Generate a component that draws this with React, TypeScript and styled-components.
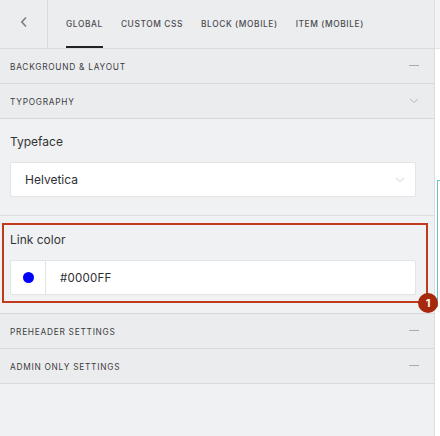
import React from "react";
import styled, { createGlobalStyle } from "styled-components";

const GlobalStyle = createGlobalStyle`
  html, body {
    margin: 0;
    padding: 0;
    background: #ffffff;
  }
  body {
    font-family: Inter, "Noto Sans", "Liberation Sans", sans-serif;
    -webkit-font-smoothing: antialiased;
  }
  #root {
    height: 436px;
  }
`;

const tabs = ["Global", "Custom CSS", "Block (Mobile)", "Item (Mobile)"];

const App = () => {
  return (
    <>
      <GlobalStyle />
      <SPage>
        <SPanel>
          <SHeader>
            <SBack>
              <svg width="10" height="12" viewBox="0 0 10 12">
                <path
                  d="M7 1.5 L2.8 6 L7 10.5"
                  fill="none"
                  stroke="#7c7d80"
                  strokeWidth="1.6"
                />
              </svg>
            </SBack>
            <STabs>
              {tabs.map((tab, i) => (
                <STab key={tab} active={i === 0}>
                  {tab}
                </STab>
              ))}
            </STabs>
          </SHeader>

          <SSection>
            <span>Background &amp; Layout</span>
            <MinusIcon />
          </SSection>
          <SSection>
            <span>Typography</span>
            <svg width="10" height="6" viewBox="0 0 10 6">
              <path
                d="M1 1 L5 4.5 L9 1"
                fill="none"
                stroke="#b8b9bc"
                strokeWidth="1"
              />
            </svg>
          </SSection>

          <SBody>
            <SField>
              <SLabel>Typeface</SLabel>
              <SInput>
                <SValue>Helvetica</SValue>
                <svg width="10" height="6" viewBox="0 0 10 6">
                  <path
                    d="M1 1 L5 4.5 L9 1"
                    fill="none"
                    stroke="#cfd0d3"
                    strokeWidth="1"
                  />
                </svg>
              </SInput>
            </SField>
            <SField>
              <SLabel>Link color</SLabel>
              <SInput>
                <SSwatch>
                  <SDot color="#0000ff" />
                </SSwatch>
                <SHex>#0000FF</SHex>
              </SInput>
              <SHighlight>
                <SBadge>1</SBadge>
              </SHighlight>
            </SField>
          </SBody>

          <SSection>
            <span>Preheader Settings</span>
            <MinusIcon />
          </SSection>
          <SSection>
            <span>Admin Only Settings</span>
            <MinusIcon />
          </SSection>
        </SPanel>

        <SCanvas>
          <SCanvasTop />
          <SCanvasItem />
        </SCanvas>
      </SPage>
    </>
  );
};

const MinusIcon = () => (
  <svg width="10" height="2" viewBox="0 0 10 2">
    <rect x="0" y="0" width="10" height="1" fill="#a9aaad" />
  </svg>
);

export default App;

const SPage = styled.div`
  display: flex;
  height: 436px;
  overflow: hidden;
`;

const SPanel = styled.div`
  width: 434px;
  flex-shrink: 0;
  display: flex;
  flex-direction: column;
  background: #f0f1f3;
  border-right: 1px solid #dcdde0;
`;

const SHeader = styled.div`
  display: flex;
  height: 48px;
  background: #ecedef;
  border-bottom: 1px solid #dadbde;
`;

const SBack = styled.div`
  width: 48px;
  display: flex;
  align-items: center;
  justify-content: center;
  border-right: 1px solid #dadbde;
  padding-bottom: 4px;
  box-sizing: border-box;
`;

const STabs = styled.div`
  display: flex;
  gap: 18px;
  padding-left: 18px;
`;

const STab = styled.div<{ active?: boolean }>`
  display: flex;
  align-items: center;
  height: 100%;
  box-sizing: border-box;
  padding-top: 2px;
  font-size: 8.4px;
  font-weight: 500;
  letter-spacing: 0.07em;
  text-transform: uppercase;
  color: #4a4b4e;
  border-bottom: 2px solid ${props => (props.active ? "#222222" : "transparent")};
  margin-bottom: -1px;
`;

const SSection = styled.div`
  display: flex;
  align-items: center;
  justify-content: space-between;
  padding: 1px 15px 0 10px;
  height: 33px;
  background: #ebecee;
  border-bottom: 1px solid #d8d9dc;
  font-size: 8.3px;
  font-weight: 400;
  letter-spacing: 0.09em;
  text-transform: uppercase;
  color: #3c3d40;
  & svg {
    margin-top: -2px;
  }
`;

const SBody = styled.div`
  display: flex;
  flex-direction: column;
  border-bottom: 1px solid #d8d9dc;
`;

const SField = styled.div`
  position: relative;
  padding: 15px 18px 18px 10px;
  & + & {
    border-top: 1px solid #dcdde0;
    padding-top: 16px;
  }
`;

const SLabel = styled.div`
  font-size: 12px;
  line-height: 16px;
  color: #333437;
  margin-bottom: 12px;
`;

const SInput = styled.div`
  height: 35px;
  box-sizing: border-box;
  display: flex;
  align-items: center;
  justify-content: space-between;
  background: #ffffff;
  border: 1px solid #e3e4e6;
  border-radius: 2px;
  padding-right: 10px;
`;

const SValue = styled.div`
  padding-left: 14px;
  font-size: 12px;
  color: #2e2f32;
`;

const SSwatch = styled.div`
  width: 34px;
  height: 100%;
  display: flex;
  align-items: center;
  justify-content: center;
  border-right: 1px solid #e3e4e6;
`;

const SDot = styled.div<{ color: string }>`
  width: 11px;
  height: 11px;
  border-radius: 50%;
  background: ${props => props.color};
`;

const SHex = styled.div`
  flex: 1;
  padding-left: 14px;
  font-size: 11.5px;
  letter-spacing: 0.02em;
  color: #2e2f32;
`;

const SHighlight = styled.div`
  position: absolute;
  left: 2px;
  top: 7px;
  width: 426px;
  height: 80px;
  box-sizing: border-box;
  border: 2px solid #c13a1e;
  pointer-events: none;
`;

const SBadge = styled.div`
  position: absolute;
  right: -12px;
  bottom: -12px;
  width: 20px;
  height: 20px;
  border-radius: 50%;
  background: #a6290b;
  color: #ffffff;
  font-size: 11px;
  font-weight: 700;
  display: flex;
  align-items: center;
  justify-content: center;
`;

const SCanvas = styled.div`
  flex: 1;
  display: flex;
  flex-direction: column;
  background: #ffffff;
`;

const SCanvasTop = styled.div`
  height: 48px;
  background: #f3f3f5;
  border-bottom: 1px solid #e2e3e5;
`;

const SCanvasItem = styled.div`
  margin: 131px 0 0 2px;
  height: 126px;
  border-left: 1px solid #62c6c8;
  border-top: 1px solid #62c6c8;
`;
